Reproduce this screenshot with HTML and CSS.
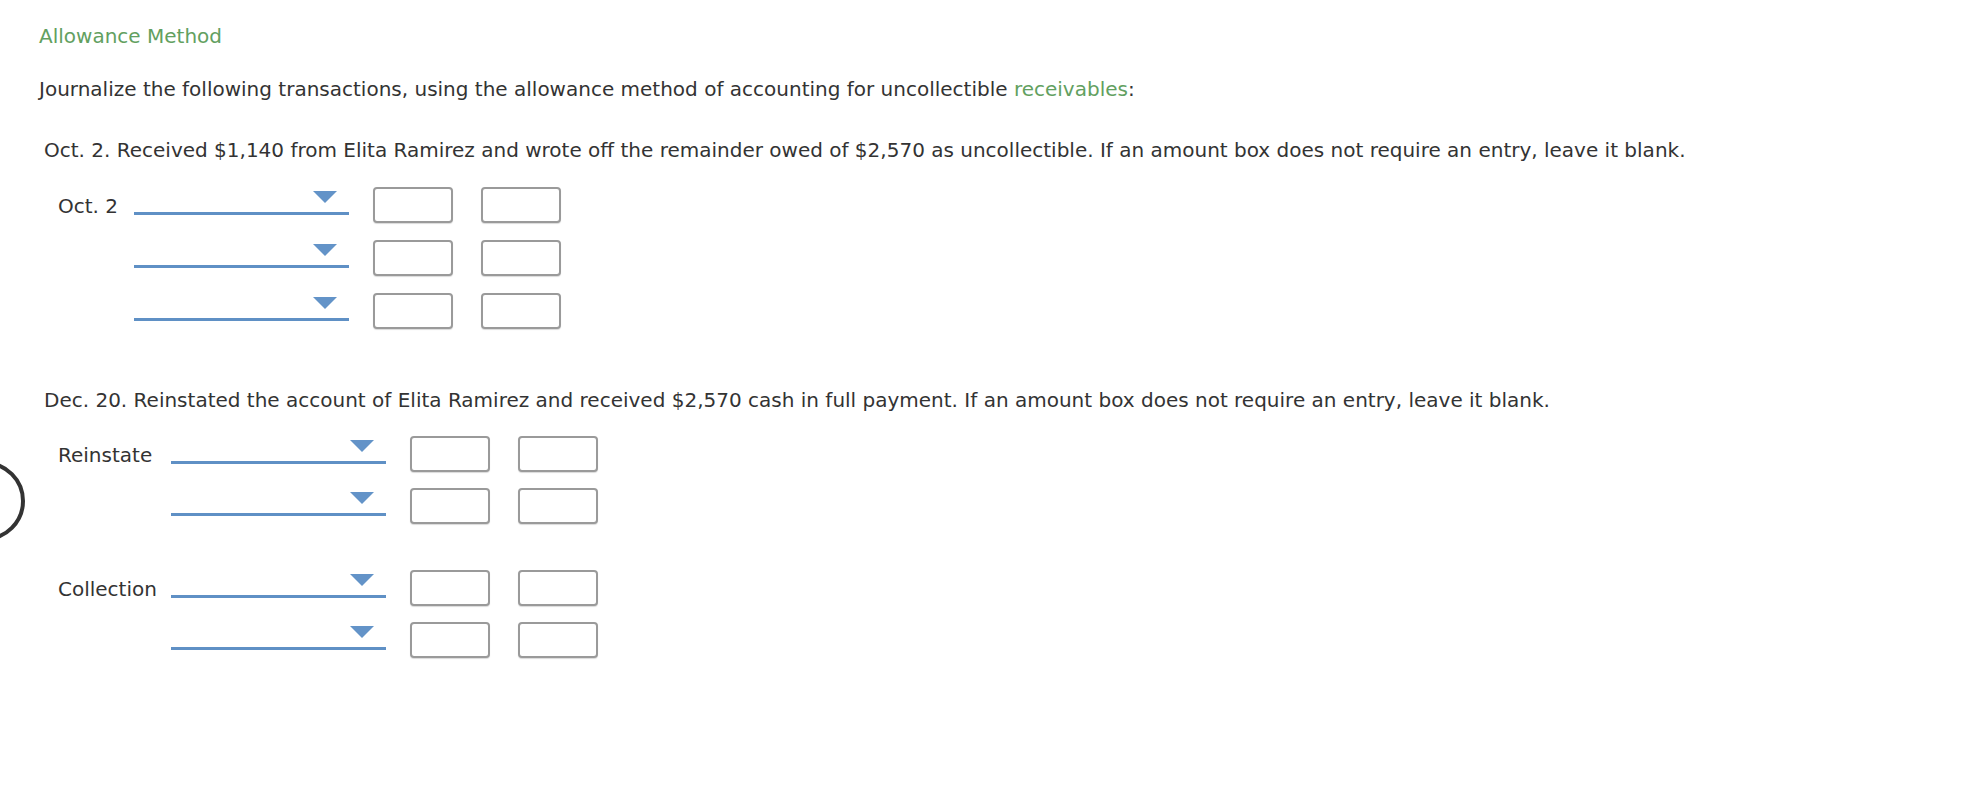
FILE: index.html
```html
<!DOCTYPE html>
<html lang="en">
<head>
<meta charset="utf-8">
<title>Allowance Method</title>
<link rel="stylesheet" href="styles.css">
</head>
<body>
<div class="ring"></div>
<div class="page">
  <div class="title">Allowance Method</div>
  <p class="intro">Journalize the following transactions, using the allowance method of accounting for uncollectible <span class="green">receivables</span>:</p>

  <section class="question q-oct">
    <p class="prompt">Oct. 2. Received $1,140 from Elita Ramirez and wrote off the remainder owed of $2,570 as uncollectible. If an amount box does not require an entry, leave it blank.</p>
    <div class="journal">
      <div class="label">Oct. 2</div>
      <div class="select"><span class="caret"></span></div>
      <div class="amount"></div>
      <div class="amount"></div>

      <div class="label"></div>
      <div class="select"><span class="caret"></span></div>
      <div class="amount"></div>
      <div class="amount"></div>

      <div class="label"></div>
      <div class="select"><span class="caret"></span></div>
      <div class="amount"></div>
      <div class="amount"></div>
    </div>
  </section>

  <section class="question q-dec">
    <p class="prompt">Dec. 20. Reinstated the account of Elita Ramirez and received $2,570 cash in full payment. If an amount box does not require an entry, leave it blank.</p>
    <div class="journal">
      <div class="label">Reinstate</div>
      <div class="select"><span class="caret"></span></div>
      <div class="amount"></div>
      <div class="amount"></div>

      <div class="label"></div>
      <div class="select"><span class="caret"></span></div>
      <div class="amount"></div>
      <div class="amount"></div>

      <div class="label group-start">Collection</div>
      <div class="select group-start"><span class="caret"></span></div>
      <div class="amount group-start"></div>
      <div class="amount group-start"></div>

      <div class="label"></div>
      <div class="select"><span class="caret"></span></div>
      <div class="amount"></div>
      <div class="amount"></div>
    </div>
  </section>
</div>
</body>
</html>
```

FILE: styles.css
```css
html, body {
  margin: 0;
  padding: 0;
  background: #ffffff;
}

body {
  font-family: "DejaVu Sans", Verdana, sans-serif;
  font-size: 20px;
  line-height: 24px;
  color: #333333;
  position: relative;
  min-height: 794px;
  overflow: hidden;
}

.page {
  padding: 24px 0 0 39px;
}

.title {
  color: #62a060;
}

.intro {
  margin: 29px 0 0 0;
}

.green {
  color: #62a060;
}

.question {
  padding-left: 5px;
}

.prompt {
  margin: 0;
}

.q-oct {
  margin-top: 37px;
}

.q-dec {
  margin-top: 59px;
}

.journal {
  display: grid;
  grid-template-columns: auto 215px 80px 84px;
  justify-content: start;
  column-gap: 24px;
  row-gap: 17px;
  margin-top: 25px;
  padding-left: 14px;
  align-items: start;
}

.q-dec .journal {
  margin-top: 24px;
  row-gap: 16px;
}

.label {
  padding-top: 7px;
  margin-right: -8px;
}

.q-dec .label {
  margin-right: -10px;
}

.select {
  position: relative;
  height: 28px;
  box-sizing: border-box;
  border-bottom: 3px solid #5f90c5;
}

.caret {
  position: absolute;
  top: 4px;
  right: 12px;
  width: 0;
  height: 0;
  border-left: 12px solid transparent;
  border-right: 12px solid transparent;
  border-top: 12px solid #6393c8;
}

.amount {
  width: 80px;
  height: 36px;
  box-sizing: border-box;
  border: 2px solid #9a9a9a;
  border-radius: 4px;
  box-shadow: 0 1px 1px rgba(0, 0, 0, 0.15);
  background: #ffffff;
}

.amount + .amount {
  margin-left: 4px;
}

.group-start {
  margin-top: 30px;
}

.ring {
  position: absolute;
  left: -55px;
  top: 461px;
  width: 80px;
  height: 80px;
  box-sizing: border-box;
  border: 4px solid #333333;
  border-radius: 50%;
}
```
